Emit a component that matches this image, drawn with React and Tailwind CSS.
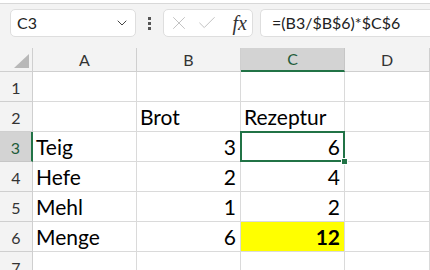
import { ChevronDown, X, Check } from "lucide-react";

const font = { fontFamily: "Lato, 'Liberation Sans', sans-serif" };

const rows = [
  { n: 1, a: "", b: "", c: "" },
  { n: 2, a: "", b: "Brot", c: "Rezeptur", text: true },
  { n: 3, a: "Teig", b: "3", c: "6" },
  { n: 4, a: "Hefe", b: "2", c: "4" },
  { n: 5, a: "Mehl", b: "1", c: "2" },
  { n: 6, a: "Menge", b: "6", c: "12" },
  { n: 7, a: "", b: "", c: "" },
];

function Cell({ children, right, className = "" }) {
  return (
    <div
      className={`h-[30px] border-r border-b border-[#dadada] flex items-end pb-[1px] text-[21px] leading-[26px] text-black overflow-visible whitespace-nowrap ${
        right ? "justify-end pr-[4px]" : "pl-[3px]"
      } ${className}`}
    >
      {children}
    </div>
  );
}

export default function App() {
  return (
    <div className="w-[430px] h-[270px] overflow-hidden bg-[#f3f3f3]" style={font}>
      {/* ribbon edge */}
      <div className="h-[4px] bg-white border-b border-[#d8d8d8]" />

      {/* formula bar */}
      <div className="flex items-center h-[36px] pt-[2px] gap-0">
        <div className="ml-[10px] w-[126px] h-[28px] bg-white border border-[#dedede] rounded-[5px] flex items-center justify-between pl-[6px] pr-[5px]">
          <span className="text-[16px] text-[#222]">C3</span>
          <ChevronDown size={16} strokeWidth={1.5} className="text-[#444]" />
        </div>
        <div className="w-[27px] flex flex-col items-center gap-[2px]">
          <span className="w-[3px] h-[3px] bg-[#555]" />
          <span className="w-[3px] h-[3px] bg-[#555]" />
          <span className="w-[3px] h-[3px] bg-[#555]" />
        </div>
        <div className="w-[90px] h-[28px] bg-white border border-[#dedede] rounded-[5px] flex items-center pl-[4px] gap-[6px]">
          <X size={22} strokeWidth={1} className="text-[#bdbdbd]" />
          <Check size={22} strokeWidth={1} className="text-[#bdbdbd]" />
          <span
            className="ml-auto mr-[5px] text-[20px] italic text-[#333] leading-none"
            style={{ fontFamily: "'Liberation Serif', serif" }}
          >
            fx
          </span>
        </div>
        <div className="ml-[7px] flex-1 h-[28px] bg-white border border-r-0 border-[#dedede] rounded-l-[5px] flex items-center pl-[11px]">
          <span className="text-[16px] text-[#222]">=(B3/$B$6)*$C$6</span>
        </div>
      </div>

      {/* sheet */}
      <div className="mt-[8px] grid grid-cols-[33px_104px_104px_104px_1fr] bg-white">
        {/* header row */}
        <div className="h-[24px] bg-[#f3f3f3] border-r border-b border-[#cfcfcf] flex items-end justify-end pr-[3px] pb-[3px]">
          <div className="w-0 h-0 border-l-[15px] border-l-transparent border-b-[14px] border-b-[#b8b8b8]" />
        </div>
        {["A", "B", "C", "D"].map((l) => (
          <div
            key={l}
            className={`h-[24px] flex items-center justify-center text-[16px] border-r ${
              l === "C"
                ? "bg-[#d3d3d3] text-[#1f5c3a] border-b-2 border-b-[#217346] border-r-[#c6c6c6]"
                : "bg-[#f3f3f3] text-[#333] border-b border-[#cfcfcf]"
            }`}
          >
            {l}
          </div>
        ))}

        {rows.map((r) => (
          <>
            <div
              key={"h" + r.n}
              className={`h-[30px] flex items-center justify-center text-[16px] pt-[2px] border-b ${
                r.n === 3
                  ? "bg-[#d3d3d3] text-[#1f5c3a] border-r-2 border-r-[#217346] border-b-[#c6c6c6]"
                  : "bg-[#f3f3f3] text-[#333] border-r border-[#cfcfcf]"
              }`}
            >
              {r.n}
            </div>
            <Cell key={"a" + r.n}>{r.a}</Cell>
            <Cell key={"b" + r.n} right={!r.text}>
              {r.b}
            </Cell>
            {r.n === 3 ? (
              <div key="c3" className="relative h-[30px] border-b border-r border-[#dadada]">
                <div className="absolute -left-[1px] -top-[1px] -right-[1px] -bottom-[1px] border-2 border-[#217346] flex items-end justify-end pr-[3px] pb-0 text-[21px] leading-[26px]">
                  6
                </div>
                <div className="absolute -right-[4px] -bottom-[4px] w-[7px] h-[7px] bg-[#217346] border border-white" />
              </div>
            ) : (
              <Cell
                key={"c" + r.n}
                right={!r.text}
                className={r.n === 6 ? "bg-[#ffff00] font-bold" : ""}
              >
                {r.c}
              </Cell>
            )}
            <Cell key={"d" + r.n} />
          </>
        ))}
      </div>
    </div>
  );
}
